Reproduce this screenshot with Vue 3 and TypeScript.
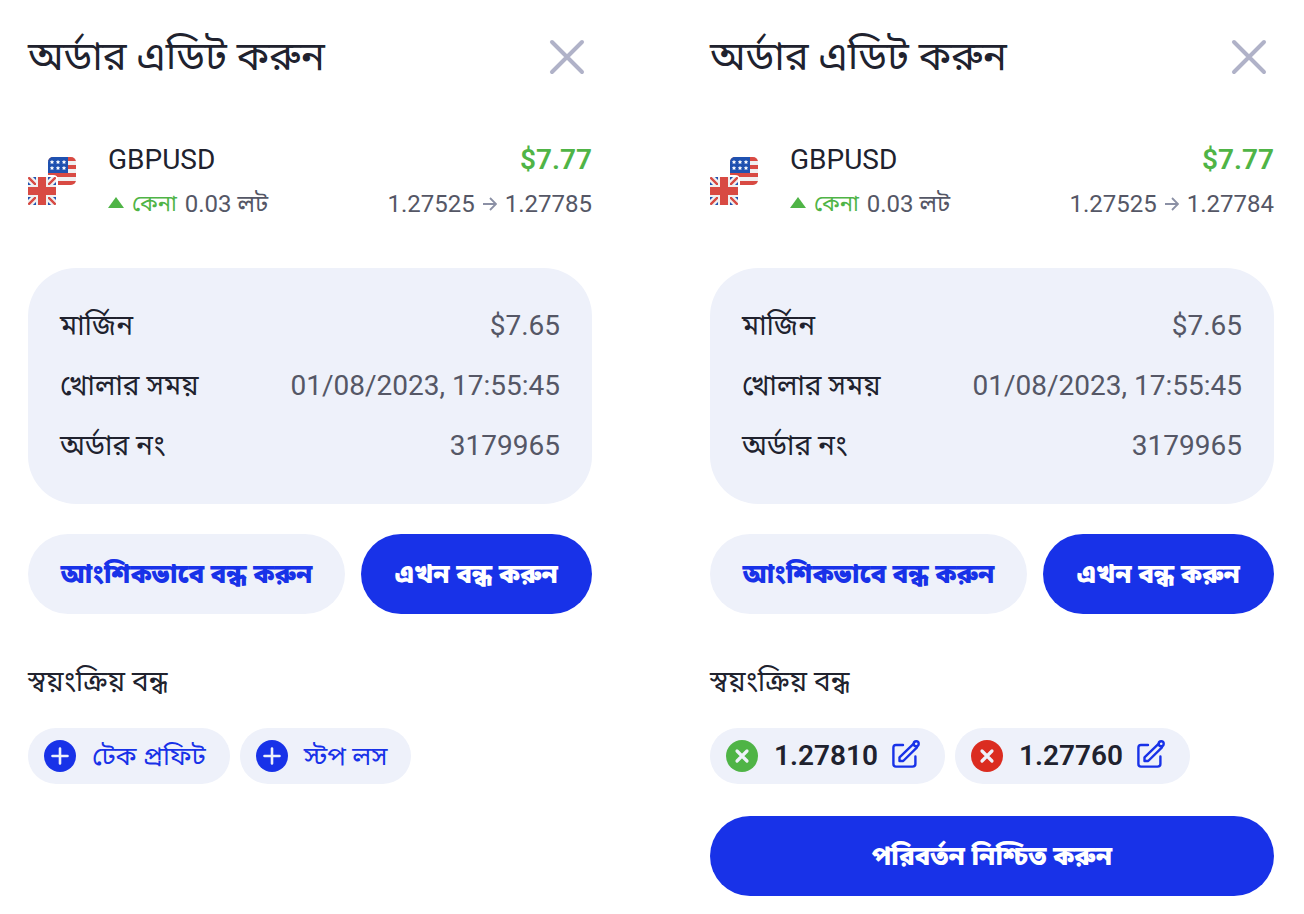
<script setup lang="ts">
interface Level {
  label: string
  tone: 'add' | 'profit' | 'loss'
}

interface Order {
  id: string
  closePrice: string
  levels: Level[]
  edited: boolean
}

const details = [
  { name: 'মার্জিন', value: '$7.65' },
  { name: 'খোলার সময়', value: '01/08/2023, 17:55:45' },
  { name: 'অর্ডার নং', value: '3179965' },
]

const orders: Order[] = [
  {
    id: 'initial',
    closePrice: '1.27785',
    levels: [
      { label: 'টেক প্রফিট', tone: 'add' },
      { label: 'স্টপ লস', tone: 'add' },
    ],
    edited: false,
  },
  {
    id: 'edited',
    closePrice: '1.27784',
    levels: [
      { label: '1.27810', tone: 'profit' },
      { label: '1.27760', tone: 'loss' },
    ],
    edited: true,
  },
]

const stars = [
  [24, 5], [30, 5], [36, 5],
  [24, 11], [30, 11], [36, 11],
]
</script>

<template>
  <main class="page">
    <section v-for="order in orders" :key="order.id" class="panel">
      <header class="head">
        <h1 class="title">অর্ডার এডিট করুন</h1>
        <button class="close" type="button" aria-label="বন্ধ">
          <svg width="36" height="36" viewBox="0 0 36 36" fill="none" stroke="#b0b2c8" stroke-width="4" stroke-linecap="round">
            <path d="M3 3L33 33M33 3L3 33" />
          </svg>
        </button>
      </header>

      <div class="instrument">
        <svg class="flags" width="48" height="50" viewBox="0 0 48 50" aria-hidden="true">
          <defs>
            <clipPath :id="`us-${order.id}`"><rect x="20" width="28" height="28" rx="5" /></clipPath>
            <clipPath :id="`uk-${order.id}`"><rect y="20" width="28" height="28" rx="1" /></clipPath>
          </defs>
          <g :clip-path="`url(#us-${order.id})`">
            <rect x="20" width="28" height="28" fill="#f0f0f0" />
            <path d="M20 0h28v4H20zM20 8h28v4H20zM20 16h28v4H20zM20 24h28v4H20z" fill="#d84a43" />
            <rect x="20" width="20" height="16" fill="#1f51b0" />
            <path
              v-for="([x, y], i) in stars"
              :key="i"
              :transform="`translate(${x} ${y})`"
              d="M0-2.3L.7-.8L2.2-.7L1.1.4L1.4 2L0 1.2L-1.4 2L-1.1.4L-2.2-.7L-.7-.8Z"
              fill="#fff"
            />
          </g>
          <path d="M0 18H25Q30 18 30 23V48H0Z" fill="#fff" />
          <g :clip-path="`url(#uk-${order.id})`">
            <rect y="20" width="28" height="28" fill="#1f51b0" />
            <path d="M0 20L28 48M28 20L0 48" stroke="#f0f0f0" stroke-width="7" />
            <path d="M0 20L28 48M28 20L0 48" stroke="#d84a43" stroke-width="2.4" />
            <path d="M14 20V48M0 34H28" stroke="#f0f0f0" stroke-width="12" />
            <path d="M14 20V48M0 34H28" stroke="#d84a43" stroke-width="8" />
          </g>
        </svg>
        <div class="facts">
          <div class="line">
            <span class="symbol">GBPUSD</span>
            <span class="profit">$7.77</span>
          </div>
          <div class="line small">
            <span class="volume">
              <svg width="16" height="14" viewBox="0 0 16 14" aria-hidden="true"><path d="M8 0L16 11H0Z" fill="#4fb446" /></svg>
              <span class="side">কেনা</span>
              <span>0.03 লট</span>
            </span>
            <span class="prices">
              1.27525
              <svg width="14" height="14" viewBox="0 0 14 14" fill="none" stroke="#8b90a5" stroke-width="1.8" aria-hidden="true"><path d="M0 7H13M7 1L13 7L7 13" /></svg>
              {{ order.closePrice }}
            </span>
          </div>
        </div>
      </div>

      <dl class="card">
        <div v-for="row in details" :key="row.name" class="row">
          <dt>{{ row.name }}</dt>
          <dd>{{ row.value }}</dd>
        </div>
      </dl>

      <div class="actions">
        <button class="btn soft" type="button">আংশিকভাবে বন্ধ করুন</button>
        <button class="btn solid" type="button">এখন বন্ধ করুন</button>
      </div>

      <h2 class="subtitle">স্বয়ংক্রিয় বন্ধ</h2>

      <div class="chips">
        <template v-for="level in order.levels" :key="level.label">
          <button v-if="level.tone === 'add'" class="chip add" type="button">
            <svg width="32" height="32" viewBox="0 0 32 32" aria-hidden="true">
              <circle cx="16" cy="16" r="16" fill="#1832e8" />
              <path d="M16 8.5V23.5M8.5 16H23.5" stroke="#eef1fa" stroke-width="2.6" stroke-linecap="round" />
            </svg>
            <span>{{ level.label }}</span>
          </button>
          <div v-else class="chip level">
            <button class="icon" type="button" aria-label="মুছুন">
              <svg width="32" height="32" viewBox="0 0 32 32">
                <circle cx="16" cy="16" r="16" :fill="level.tone === 'profit' ? '#4fb446' : '#db2c20'" />
                <path d="M11 11L21 21M21 11L11 21" stroke="#eef1fa" stroke-width="3.2" stroke-linecap="round" />
              </svg>
            </button>
            <span class="price">{{ level.label }}</span>
            <button class="icon edit" type="button" aria-label="এডিট">
              <svg width="28" height="32" viewBox="0 0 28 32" fill="none" stroke="#1832e8" stroke-width="2.4" stroke-linecap="round" stroke-linejoin="round">
                <path d="M11 5H4Q1.4 5 1.4 8V24Q1.4 26.6 4 26.6H20.5Q23.4 26.6 23.4 24V16.5" />
                <path d="M21.5 3.8L7.5 17.3V21H11.2L25 7.3" />
                <circle cx="24.2" cy="3.8" r="2.5" />
              </svg>
            </button>
          </div>
        </template>
      </div>

      <button v-if="order.edited" class="btn solid confirm" type="button">পরিবর্তন নিশ্চিত করুন</button>
    </section>
  </main>
</template>

<style>
body {
  margin: 0;
  background: #fff;
}
</style>

<style scoped>
.page {
  display: grid;
  grid-template-columns: 1fr 1fr;
  gap: 118px;
  padding: 28px 30px 18px 28px;
  font-family: Roboto, "Noto Sans Bengali", "Noto Sans", sans-serif;
  font-size: 28px;
  line-height: 40px;
  color: #20222e;
}
button {
  border: 0;
  padding: 0;
  font: inherit;
  cursor: pointer;
}
svg {
  display: block;
  flex: none;
}
.head {
  display: flex;
  align-items: center;
  justify-content: space-between;
  height: 58px;
}
.title {
  margin: 0;
  font-size: 40px;
  line-height: 58px;
  font-weight: 400;
}
.close {
  margin-right: 7px;
  background: none;
}
.instrument {
  display: flex;
  align-items: center;
  gap: 32px;
  margin-top: 52px;
}
.facts {
  flex: 1;
}
.line {
  display: flex;
  align-items: center;
  justify-content: space-between;
  height: 44px;
}
.small {
  font-size: 24px;
  color: #555766;
}
.profit {
  font-weight: 600;
  color: #4fb446;
}
.side {
  font-size: 22px;
  color: #4fb446;
}
.volume,
.prices {
  display: flex;
  align-items: center;
  gap: 8px;
}
.card {
  margin: 42px 0 0;
  padding: 28px 32px;
  border-radius: 48px;
  background: #eef1fa;
}
.row {
  display: flex;
  align-items: center;
  justify-content: space-between;
  height: 60px;
}
dd {
  margin: 0;
  color: #555766;
}
.actions {
  display: grid;
  grid-template-columns: 317fr 231fr;
  gap: 16px;
  margin-top: 30px;
}
.btn {
  height: 80px;
  border-radius: 40px;
  font-weight: 900;
  font-size: 26px;
  white-space: nowrap;
}
.soft {
  background: #eef1fa;
  color: #1832e8;
}
.solid {
  background: #1832e8;
  color: #fff;
}
.subtitle {
  margin: 48px 0 0;
  font-size: 28px;
  line-height: 40px;
  font-weight: 400;
}
.chips {
  display: flex;
  gap: 10px;
  margin-top: 26px;
}
.chip {
  display: flex;
  align-items: center;
  gap: 16px;
  height: 56px;
  padding: 0 24px 0 16px;
  border-radius: 28px;
  background: #eef1fa;
}
.add {
  font-size: 26px;
  color: #1832e8;
}
.level {
  padding-right: 25px;
}
.price {
  font-weight: 600;
}
.icon {
  background: none;
}
.edit {
  margin-left: -2px;
}
.confirm {
  width: 100%;
  margin-top: 32px;
}
</style>
